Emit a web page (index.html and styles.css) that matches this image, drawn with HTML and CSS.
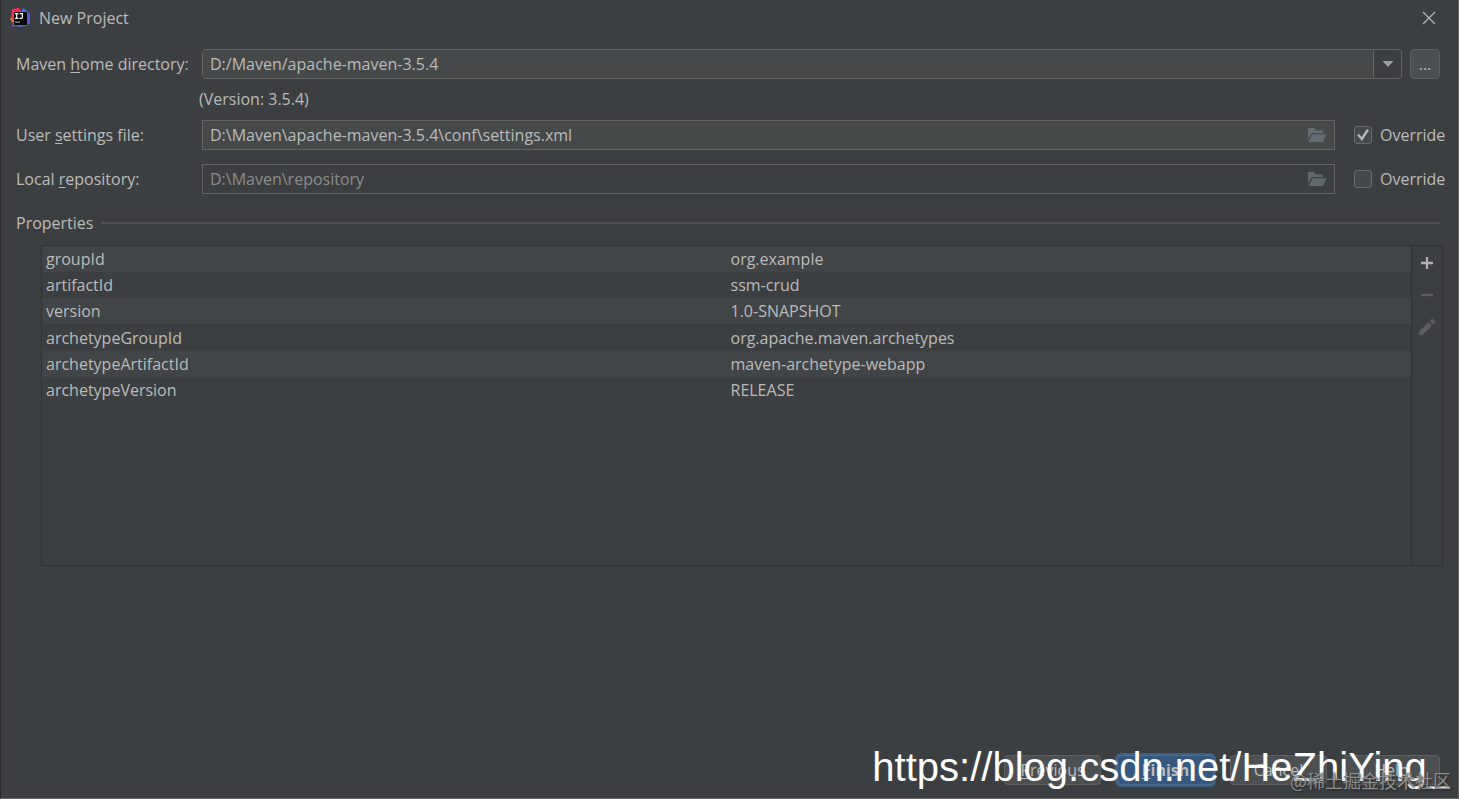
FILE: index.html
```html
<!DOCTYPE html>
<html lang="en">
<head>
<meta charset="utf-8">
<title>New Project</title>
<link rel="stylesheet" href="styles.css">
</head>
<body>
<main class="dialog">
  <header class="titlebar">
    <svg class="logo" viewBox="0 0 20 20" aria-hidden="true">
      <path fill="#f97a12" d="M0 11l2-3 4 1v6l-4-1z"/>
      <path fill="#fe2857" d="M2 1l7-1 3 5-6 9-5-4z"/>
      <path fill="#3d6df2" d="M11 3l2-3 4 3 3 3v9l-4 3-9 1 3-14z"/>
      <path fill="#5a55e0" d="M16 4l4 2v9l-4 3V5z"/>
      <path fill="#9a4bd0" d="M3 14h6v3l-4 1-3 1z"/>
      <path fill="#08080a" d="M4 4h13v13H4z"/>
      <path fill="none" stroke="#fff" stroke-width="1.200" d="M5 5.600h3.400M6.700 5.600v4.800M5 10.400h3.400M9.600 5.600h2.800v3.600c0 .8-.5 1.200-1.200 1.200H9.400"/>
      <path fill="#a0a0a0" d="M5 13.500h5v1.200H5z"/>
    </svg>
    <h1 class="title">New Project</h1>
    <button class="close" type="button" aria-label="Close">
      <svg width="14" height="14" viewBox="0 0 14 14"><path d="M1 1l12 12M13 1L1 13" stroke="#b4b6b7" stroke-width="1.300" fill="none"/></svg>
    </button>
  </header>

  <form class="content">
    <div class="row">
      <label class="label" for="home">Maven <u>h</u>ome directory:</label>
      <div class="combo">
        <input class="combo-text" id="home" type="text" value="D:/Maven/apache-maven-3.5.4">
        <button class="combo-arrow" type="button" aria-label="Show list">
          <svg width="12" height="8" viewBox="0 0 12 8"><path d="M.5 1h11L6 7z" fill="#9b9fa1"/></svg>
        </button>
      </div>
      <button class="browse" type="button">...</button>
    </div>
    <p class="version">(Version: 3.5.4)</p>
    <div class="row">
      <label class="label" for="settings">User <u>s</u>ettings file:</label>
      <div class="field">
        <input class="field-text" id="settings" type="text" value="D:\Maven\apache-maven-3.5.4\conf\settings.xml">
        <button class="folder" type="button" aria-label="Browse settings file">
          <svg width="20" height="16" viewBox="0 0 20 16"><path fill="#646c71" d="M1 1h6l2 2.500h7V6H5L1 12.500z"/><path fill="#646c71" d="M5.600 7.200H19.500L16 15H1.300z"/></svg>
        </button>
      </div>
      <label class="override"><input class="check" type="checkbox" checked>Override</label>
    </div>
    <div class="row row-repository">
      <label class="label" for="repository">Local <u>r</u>epository:</label>
      <div class="field field-off">
        <input class="field-text" id="repository" type="text" value="D:\Maven\repository" disabled>
        <button class="folder" type="button" aria-label="Browse repository" disabled>
          <svg width="20" height="16" viewBox="0 0 20 16"><path fill="#60686c" d="M1 1h6l2 2.500h7V6H5L1 12.500z"/><path fill="#60686c" d="M5.600 7.200H19.500L16 15H1.300z"/></svg>
        </button>
      </div>
      <label class="override"><input class="check" type="checkbox">Override</label>
    </div>

    <h2 class="section">Properties</h2>
    <div class="panel">
      <div class="table-area">
        <table class="properties">
          <tbody>
            <tr><td>groupId</td><td>org.example</td></tr>
            <tr><td>artifactId</td><td>ssm-crud</td></tr>
            <tr><td>version</td><td>1.0-SNAPSHOT</td></tr>
            <tr><td>archetypeGroupId</td><td>org.apache.maven.archetypes</td></tr>
            <tr><td>archetypeArtifactId</td><td>maven-archetype-webapp</td></tr>
            <tr><td>archetypeVersion</td><td>RELEASE</td></tr>
          </tbody>
        </table>
      </div>
      <div class="tools">
        <button class="tool" type="button" aria-label="Add"><svg width="20" height="20" viewBox="0 0 20 20"><path d="M10 4v12M4 10h12" stroke="#afb1b3" stroke-width="2.300"/></svg></button>
        <button class="tool" type="button" aria-label="Remove" disabled><svg width="20" height="20" viewBox="0 0 20 20"><path d="M4 10h12" stroke="#5c5e5f" stroke-width="2.300"/></svg></button>
        <button class="tool" type="button" aria-label="Edit" disabled><svg width="20" height="20" viewBox="0 0 20 20"><path fill="#5c5e5f" d="M2 14.500L11.500 5 15 8.500 5.500 18H2zM12.500 4l2-2c.4-.4.900-.4 1.300 0l2.200 2.200c.4.400.4.900 0 1.300l-2 2z"/></svg></button>
      </div>
    </div>
  </form>

  <footer class="actions">
    <button class="button" type="button"><u>P</u>revious</button>
    <button class="button button-primary" type="submit"><u>F</u>inish</button>
    <button class="button" type="button">Cancel</button>
    <button class="button" type="button">Help</button>
  </footer>
  <span class="mark-url">https://blog.csdn.net/HeZhiYing_</span>
  <span class="mark-community">@稀土掘金技术社区</span>
</main>
</body>
</html>
```

FILE: styles.css
```css
* { box-sizing: border-box; }

body {
  margin: 0;
  background: #3c3f41;
  color: #bbbbbb;
  font: 16px/22px "Open Sans", "Noto Sans CJK SC", sans-serif;
}

button, input { font: inherit; color: inherit; margin: 0; }
button { padding: 0; border: 0; background: none; }
svg { display: block; }
u { text-underline-offset: 2px; text-decoration-thickness: 1px; text-decoration-skip-ink: none; }

.dialog {
  position: relative;
  display: flex;
  flex-direction: column;
  min-height: 100vh;
  border: solid #666666;
  border-width: 0 1px 1px;
  border-left-color: #2b2b2b;
}

.titlebar {
  display: flex;
  align-items: center;
  height: 36px;
  padding: 0 22px 0 9px;
}
.logo { width: 20px; height: 20px; }
.title { flex: 1; margin: 0 0 0 9px; font-size: 16px; font-weight: 400; }

.content { display: flex; flex-direction: column; padding: 13px 15px 0; }

.row { display: flex; align-items: center; height: 30px; }
.row-repository { margin-top: 14px; }
.label { flex: none; width: 186px; white-space: nowrap; }
.version { margin: 9px 0 10px 183px; }

.combo {
  display: flex;
  flex: 1;
  height: 30px;
  margin-right: 8px;
  border: 1px solid #646464;
  border-radius: 4px;
  overflow: hidden;
}
.combo-text, .field-text {
  flex: 1;
  min-width: 0;
  padding: 0 7px;
  border: 0;
  outline: 0;
  background: #45494a;
}
.combo-arrow {
  display: grid;
  place-items: center;
  width: 28px;
  border-left: 1px solid #646464;
}
.browse {
  width: 30px;
  height: 30px;
  margin-right: 3px;
  border: 1px solid #5e6060;
  border-radius: 4px;
  background: #4c5052;
}

.field {
  display: flex;
  flex: 1;
  height: 30px;
  border: 1px solid #646464;
  background: #45494a;
}
.field-off, .field-off .field-text { background: #3c3f41; color: #8c8c8c; }
.folder { display: grid; place-items: center; width: 34px; }

.override {
  display: flex;
  flex: none;
  align-items: center;
  gap: 8px;
  width: 89px;
  margin-left: 19px;
}
.check {
  appearance: none;
  display: grid;
  flex: none;
  place-items: center;
  width: 18px;
  height: 18px;
  border: 1px solid #6b6b6b;
  border-radius: 3px;
  background: #43494a;
}
.check:checked::before {
  content: "";
  width: 12px;
  height: 12px;
  background: #b4b4b4;
  clip-path: polygon(0 52%, 16% 40%, 38% 66%, 82% 0, 100% 10%, 42% 100%);
}

.section {
  display: flex;
  align-items: center;
  gap: 8px;
  margin: 18px 3px 11px 0;
  font-size: 16px;
  font-weight: 400;
}
.section::after { content: ""; flex: 1; height: 2px; background: #515151; }

.panel {
  display: flex;
  min-height: 321px;
  margin-left: 25px;
  border: 1px solid #323232;
}
.table-area { flex: 1; }
.properties { width: 100%; height: 157px; border-collapse: collapse; table-layout: fixed; }
.properties td { padding: 0 4px; }
.properties tr:nth-child(odd) { background: #414547; }
.tools {
  display: flex;
  flex-direction: column;
  align-items: center;
  gap: 12px;
  width: 31px;
  padding-top: 7px;
  border-left: 1px solid #323232;
}

.actions {
  display: flex;
  justify-content: flex-end;
  gap: 16px;
  margin-top: auto;
  padding: 24px 18px 13px;
}
.button {
  width: 97px;
  height: 30px;
  border: 1px solid #5e6060;
  border-radius: 4px;
  background: #4c5052;
}
.button-primary {
  border-color: #4c708c;
  background: #365880;
  box-shadow: 0 0 0 2px #3d6185;
  font-weight: 700;
}

.mark-url, .mark-community { position: absolute; white-space: nowrap; pointer-events: none; }
.mark-url {
  right: 9px;
  bottom: 8px;
  color: #ffffff;
  font: 40px/46px "Liberation Sans", sans-serif;
}
.mark-community {
  right: 7px;
  bottom: 5px;
  color: #8d8f90;
  font: 18px/26px "Noto Sans CJK SC", sans-serif;
  text-shadow: 1px 1px 2px #222222;
}
```
